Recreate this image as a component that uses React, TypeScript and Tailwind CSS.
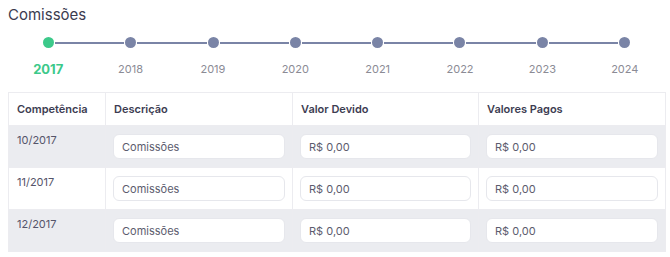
import React from 'react';

const years = ['2017', '2018', '2019', '2020', '2021', '2022', '2023', '2024'];

const rows = [
  { competencia: '10/2017', descricao: 'Comissões', devido: 'R$ 0,00', pagos: 'R$ 0,00' },
  { competencia: '11/2017', descricao: 'Comissões', devido: 'R$ 0,00', pagos: 'R$ 0,00' },
  { competencia: '12/2017', descricao: 'Comissões', devido: 'R$ 0,00', pagos: 'R$ 0,00' },
];

const Field: React.FC<{ value: string }> = ({ value }) => (
  <input
    readOnly
    value={value}
    className="block h-[25px] w-full rounded-[6px] border border-[#e6e7ec] bg-white px-2 text-[11px] text-[#5c5c6e] outline-none"
  />
);

const App: React.FC = () => {
  const active = 0;

  return (
    <div className="w-[670px] bg-white pb-2 font-['Inter',sans-serif]">
      <h2 className="px-2 pt-[5px] text-[15px] leading-5 text-[#3b3b4f]">Comissões</h2>

      {/* Timeline */}
      <div className="ml-[43px] mr-[40px] mt-3 flex items-center">
        {years.map((year, i) => (
          <React.Fragment key={year}>
            <span
              className={
                i === active
                  ? 'h-[11px] w-[11px] shrink-0 rounded-full bg-[#3cc98a]'
                  : 'h-[11px] w-[11px] shrink-0 rounded-full bg-[#7a84a6]'
              }
            />
            {i < years.length - 1 && <span className="mx-px h-[2px] flex-1 bg-[#7a84a6]" />}
          </React.Fragment>
        ))}
      </div>
      <div className="mt-[13px] grid grid-cols-8 pl-[7px] pr-[4px] text-center">
        {years.map((year, i) => (
          <span
            key={year}
            className={
              i === active
                ? 'text-[13px] font-bold leading-4 text-[#3cc98a]'
                : 'text-[11px] leading-4 text-[#8b8b95]'
            }
          >
            {year}
          </span>
        ))}
      </div>

      {/* Table */}
      <table className="ml-2 mt-[15px] w-[657px] table-fixed border-collapse text-left">
        <colgroup>
          <col className="w-[97px]" />
          <col className="w-[187px]" />
          <col className="w-[186px]" />
          <col className="w-[187px]" />
        </colgroup>
        <thead>
          <tr className="h-[33px] text-[11px] text-[#3d3d52]">
            <th className="border border-[#ececf0] px-2 font-semibold">Competência</th>
            <th className="border border-[#ececf0] px-2 font-semibold">Descrição</th>
            <th className="border border-[#ececf0] px-2 font-semibold">Valor Devido</th>
            <th className="border border-[#ececf0] px-2 font-semibold">Valores Pagos</th>
          </tr>
        </thead>
        <tbody>
          {rows.map((row, i) => (
            <tr key={row.competencia} className={i % 2 === 0 ? 'bg-[#ebecf0]' : 'bg-white'}>
              <td className="border border-[#ececf0] px-2 pt-[6px] align-top text-[11px] leading-4 text-[#55556a]">
                {row.competencia}
              </td>
              <td className="border border-[#ececf0] px-[7px] py-2">
                <Field value={row.descricao} />
              </td>
              <td className="border border-[#ececf0] px-[7px] py-2">
                <Field value={row.devido} />
              </td>
              <td className="border border-[#ececf0] px-[7px] py-2">
                <Field value={row.pagos} />
              </td>
            </tr>
          ))}
        </tbody>
      </table>
    </div>
  );
};

export default App;
